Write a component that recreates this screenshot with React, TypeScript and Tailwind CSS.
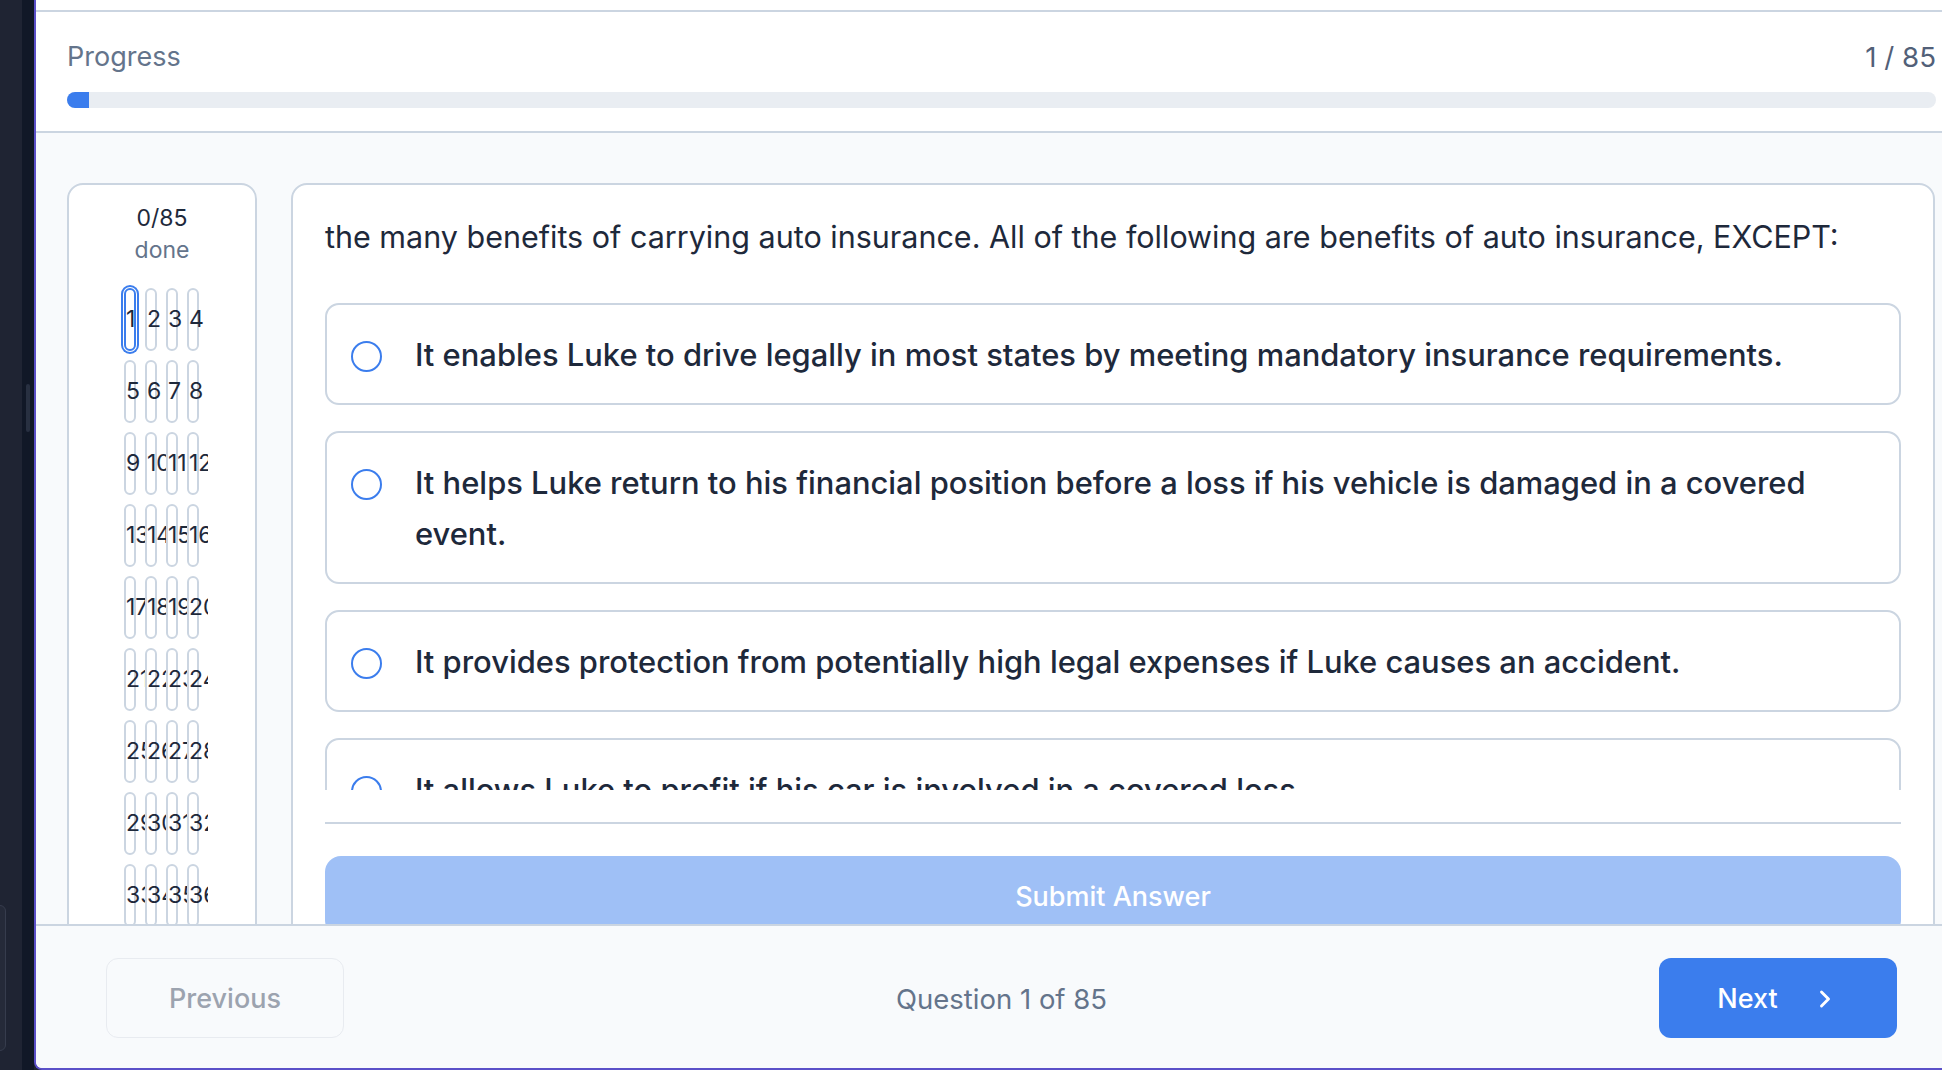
import { ChevronRight } from "lucide-react";

const TOTAL = 85;
const CURRENT = 1;

const question =
  "the many benefits of carrying auto insurance. All of the following are benefits of auto insurance, EXCEPT:";

const options = [
  "It enables Luke to drive legally in most states by meeting mandatory insurance requirements.",
  "It helps Luke return to his financial position before a loss if his vehicle is damaged in a covered event.",
  "It provides protection from potentially high legal expenses if Luke causes an accident.",
  "It allows Luke to profit if his car is involved in a covered loss.",
];

function QuestionPill({ n, active }: { n: number; active: boolean }) {
  return (
    <div
      className={`h-[63px] w-[12px] rounded-full border-2 bg-white text-center text-[23px] leading-[59px] text-[#1e293b] ${
        active
          ? "border-[#3b7ded] ring-2 ring-[#3b7ded] ring-offset-1"
          : "border-[#cbd5e1]"
      }`}
    >
      {n}
    </div>
  );
}

function Sidebar() {
  return (
    <div className="w-[190px] shrink-0 rounded-2xl border-2 border-[#cbd5e1] bg-white pt-[17px]">
      <div className="text-center text-[23px] leading-[32px] text-[#1e293b]">
        0/{TOTAL}
      </div>
      <div className="text-center text-[23px] leading-[32px] text-[#64748b]">done</div>
      <div className="ml-[52px] mt-[19px] w-[87px] overflow-hidden pl-[3px] pt-[3px] pb-[20px]">
        <div className="grid grid-cols-[repeat(4,12px)] gap-x-[9px] gap-y-[9px]">
          {Array.from({ length: TOTAL }, (_, i) => (
            <QuestionPill key={i} n={i + 1} active={i + 1 === CURRENT} />
          ))}
        </div>
      </div>
    </div>
  );
}

function Option({ text }: { text: string }) {
  return (
    <div className="flex shrink-0 items-start gap-[33px] rounded-[14px] border-2 border-[#cbd5e1] bg-white pl-[24px] pr-[24px] pt-[24px] pb-[23px]">
      <span className="mt-[12px] h-[31px] w-[31px] shrink-0 rounded-full border-2 border-[#3b7ded]" />
      <p className="text-[30.9px] font-medium leading-[51px] text-[#1e293b]">{text}</p>
    </div>
  );
}

function QuestionCard() {
  return (
    <div className="min-h-[900px] flex-1 rounded-2xl border-2 border-[#cbd5e1] bg-white px-[32px] pt-[29px]">
      <p className="text-[30.5px] leading-[46px] text-[#1e293b]">{question}</p>
      <div className="mt-[43px] flex h-[487px] flex-col gap-[26px] overflow-hidden">
        {options.map((o) => (
          <Option key={o} text={o} />
        ))}
      </div>
      <div className="mt-[32px] border-t-2 border-[#cbd5e1] pt-[32px]">
        <button className="h-[80px] w-full rounded-[16px] bg-[#9fc0f6] pt-[2px] text-[27px] font-medium text-white">
          Submit Answer
        </button>
      </div>
    </div>
  );
}

export default function App() {
  return (
    <div className="flex h-[1070px] w-[1942px] overflow-hidden bg-[#1f2433] [font-family:Inter,sans-serif]">
      {/* editor chrome on the left */}
      <div className="w-[22px] shrink-0 bg-[#1f2433]">
        <div className="ml-[-2px] mt-[905px] h-[146px] w-[8px] rounded-r-[6px] border border-[#363c4d] bg-[#252a39]" />
      </div>
      <div className="w-[12px] shrink-0 bg-[#111827]">
        <div className="ml-[4px] mt-[384px] h-[48px] w-[4px] rounded-full bg-[#283041]" />
      </div>

      <div className="flex h-[1070px] w-[1933px] shrink-0 flex-col overflow-hidden rounded-bl-[8px] border-b-2 border-l-2 border-[#5b50c8] bg-white">
        <div className="h-[12px] shrink-0 border-b-2 border-[#cbd5e1] bg-white" />

        <div className="shrink-0 border-b-2 border-[#cbd5e1] bg-white px-[31px] pt-[27px] pb-[23px]">
          <div className="flex items-center justify-between leading-[36px]">
            <span className="text-[27px] text-[#64748b]">Progress</span>
            <span className="text-[27.7px] text-[#526078]">
              {CURRENT} / {TOTAL}
            </span>
          </div>
          <div className="mt-[17px] h-4 w-full overflow-hidden rounded-full bg-[#e9edf2]">
            <div
              className="h-full bg-[#3b7ded]"
              style={{ width: `${(CURRENT / TOTAL) * 100}%` }}
            />
          </div>
        </div>

        <div className="flex flex-1 items-start gap-[34px] overflow-hidden bg-[#f8fafc] pl-[31px] pr-[32px] pt-[50px]">
          <Sidebar />
          <QuestionCard />
        </div>

        <div className="flex h-[144px] shrink-0 items-center justify-between border-t-2 border-[#cbd5e1] bg-[#f8fafc] px-[70px] pt-[2px]">
          <button className="h-[80px] w-[238px] rounded-[12px] border border-[#e8ebf0] pt-[2px] text-[27px] font-medium text-[#9ca3af]">
            Previous
          </button>
          <span className="pt-[3px] text-[27.5px] text-[#64748b]">
            Question {CURRENT} of {TOTAL}
          </span>
          <button className="flex h-[80px] w-[238px] items-center justify-center gap-[33px] rounded-[12px] bg-[#3b7ded] pt-[2px] text-[27px] font-medium text-white">
            Next
            <ChevronRight size={28} strokeWidth={2.5} />
          </button>
        </div>
      </div>
    </div>
  );
}
